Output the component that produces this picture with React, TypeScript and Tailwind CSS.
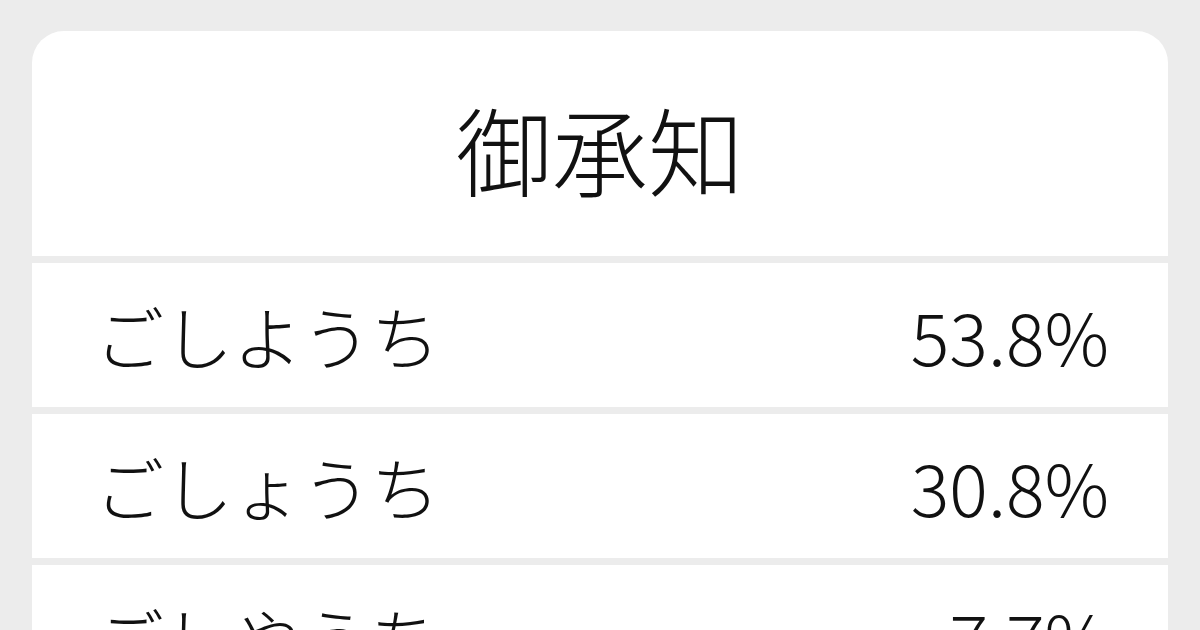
import React from "react";

const rows = [
  { r: "ごしようち", p: "53.8%" },
  { r: "ごしょうち", p: "30.8%" },
  { r: "ごしやうち", p: "7.7%" },
];

export default function App() {
  return (
    <div
      className="w-[1200px] h-[630px] overflow-hidden bg-[#ececec] pt-[31px] px-[32px]"
      style={{ fontFamily: '"Noto Sans CJK JP", "Noto Sans", sans-serif' }}
    >
      <div className="rounded-t-[32px] overflow-hidden flex flex-col gap-[7px]">
        <div className="h-[225px] bg-white flex items-center justify-center text-[96px] font-extralight text-[#111] leading-none pt-[8px]">
          御承知
        </div>
        {rows.map((x) => (
          <div
            key={x.r}
            className="h-[144px] shrink-0 bg-white flex items-center justify-between pl-[63px] pr-[59px] font-extralight text-[#111] leading-none"
          >
            <span className="text-[69px]">{x.r}</span>
            <span className="text-[72px]">{x.p}</span>
          </div>
        ))}
      </div>
    </div>
  );
}
